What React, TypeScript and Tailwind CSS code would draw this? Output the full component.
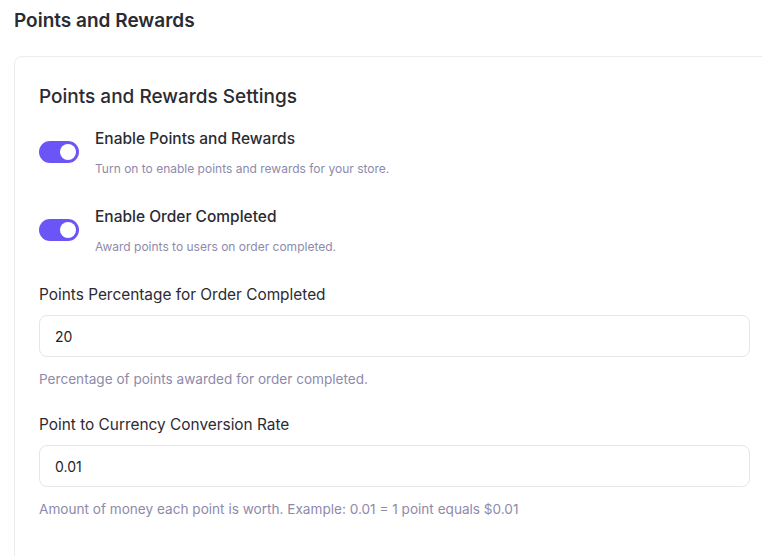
const Toggle = () => (
  <div className="relative h-[22px] w-10 shrink-0 rounded-full bg-[#6c55f6]">
    <span className="absolute right-[3px] top-[3px] h-4 w-4 rounded-full bg-white" />
  </div>
);

const SwitchRow = ({ title, desc }: { title: string; desc: string }) => (
  <div className="flex items-center gap-4">
    <Toggle />
    <div className="flex flex-col">
      <p className="text-[15.5px] leading-6 font-medium text-[#2b2b33]">{title}</p>
      <p className="mt-2.5 text-xs leading-4 text-[#8e8aab]">{desc}</p>
    </div>
  </div>
);

const Field = ({ label, value, help }: { label: string; value: string; help: string }) => (
  <div className="flex flex-col">
    <label className="text-[15.4px] leading-6 text-[#2b2b33]">{label}</label>
    <input
      readOnly
      value={value}
      className="mt-2 h-[42px] w-full rounded-lg border border-[#e6e6ea] bg-white px-[15px] text-sm text-[#1f1f24] outline-none"
    />
    <p className="mt-3 text-[13.6px] leading-5 text-[#8e8aab]">{help}</p>
  </div>
);

const App = () => {
  return (
    <main className="h-[556px] w-screen overflow-hidden bg-white font-['Inter',sans-serif]">
      <div className="w-[789px] px-[14px]">
        <h1 className="pt-[9px] text-[19px] leading-6 font-semibold text-[#2b2b33]">Points and Rewards</h1>
        <section className="mt-[23px] rounded-tl-lg border border-[#ececef] px-6 pt-[26px] pb-10">
          <h2 className="text-[19px] leading-7 font-medium text-[#2b2b33]">Points and Rewards Settings</h2>
          <div className="mt-4 flex flex-col gap-7">
            <SwitchRow
              title="Enable Points and Rewards"
              desc="Turn on to enable points and rewards for your store."
            />
            <SwitchRow title="Enable Order Completed" desc="Award points to users on order completed." />
            <Field
              label="Points Percentage for Order Completed"
              value="20"
              help="Percentage of points awarded for order completed."
            />
          </div>
          <div className="mt-6">
            <Field
              label="Point to Currency Conversion Rate"
              value="0.01"
              help="Amount of money each point is worth. Example: 0.01 = 1 point equals $0.01"
            />
          </div>
        </section>
      </div>
    </main>
  );
};

export default App;
